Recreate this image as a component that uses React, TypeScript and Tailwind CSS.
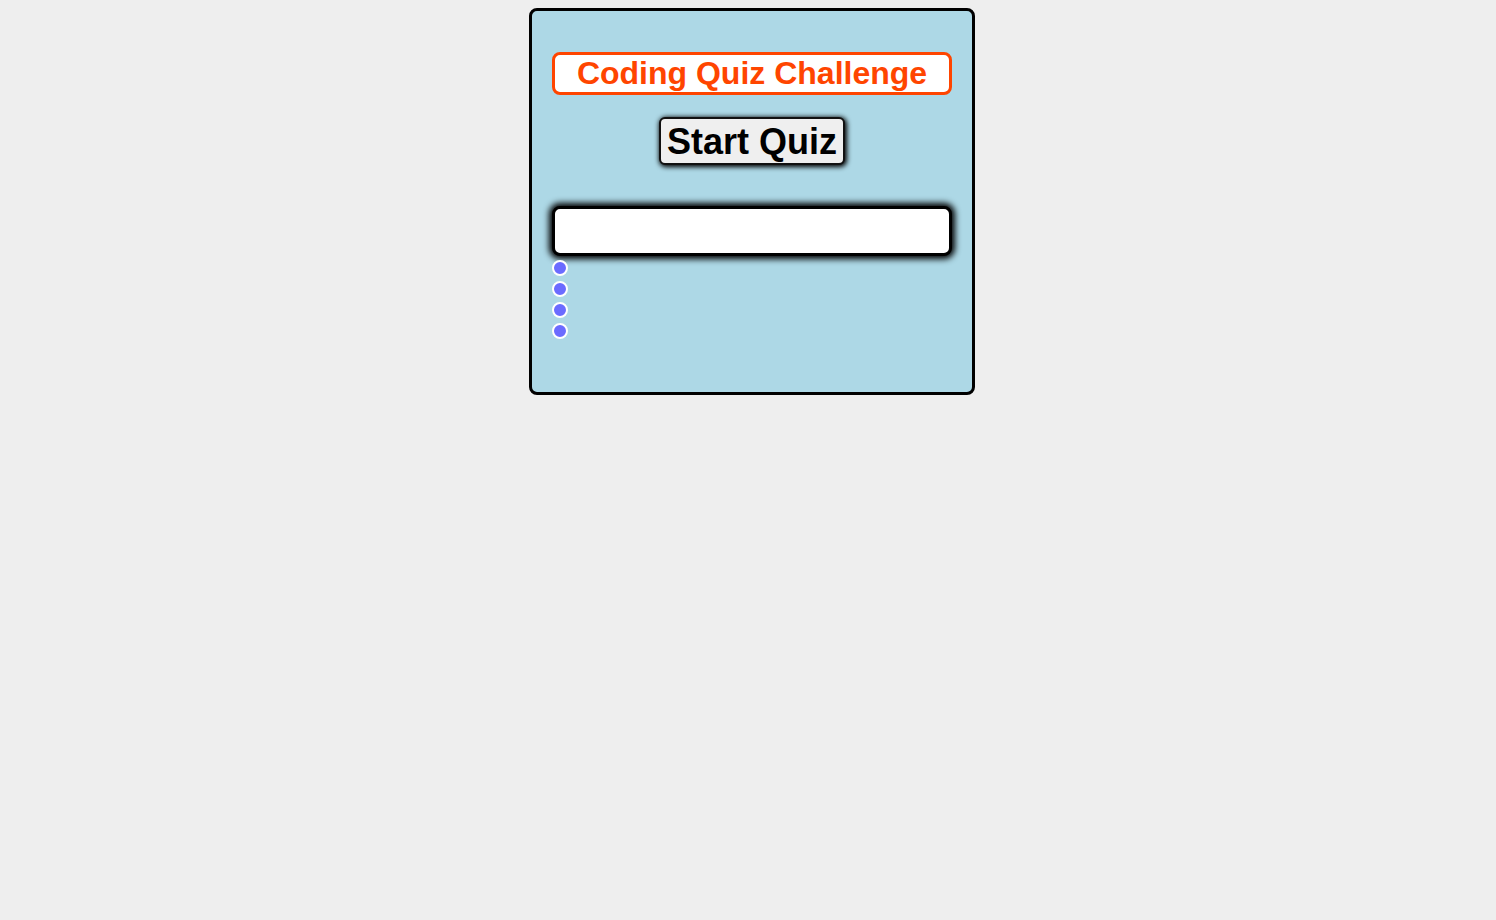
import React from "react";

const font = { fontFamily: '"Liberation Sans", Arial, sans-serif' };

export default function App() {
  return (
    <div className="min-h-screen bg-[#eeeeee] pt-2 pl-2" style={font}>
      <div className="mx-auto w-[446px] rounded-lg border-[3px] border-black bg-[#add8e6] px-5 pt-5 pb-[53px]">
        <h1 className="mt-[21px] mb-[22px] rounded-lg border-[3px] border-[#ff4500] bg-white text-center text-[32px] font-bold leading-[37px] text-[#ff4500]">
          Coding Quiz Challenge
        </h1>

        <div className="flex justify-center">
          <button className="h-[48px] rounded-md border-2 border-[#111] bg-[#efefef] px-[6px] text-[36px] font-bold leading-[41px] text-black shadow-[1px_1px_5px_1px_#000]">
            Start Quiz
          </button>
        </div>

        {/* question box */}
        <div className="mt-[41px] h-[50px] rounded-lg border-[3px] border-black bg-white shadow-[0_0_6px_3px_#000]" />

        {/* answer options */}
        <div className="mt-[4px] flex flex-col gap-[5px]">
          {[0, 1, 2, 3].map((i) => (
            <input
              key={i}
              type="radio"
              name="answer"
              className="h-4 w-4 appearance-none rounded-full border-2 border-white bg-[#6b6bff]"
            />
          ))}
        </div>
      </div>
    </div>
  );
}
